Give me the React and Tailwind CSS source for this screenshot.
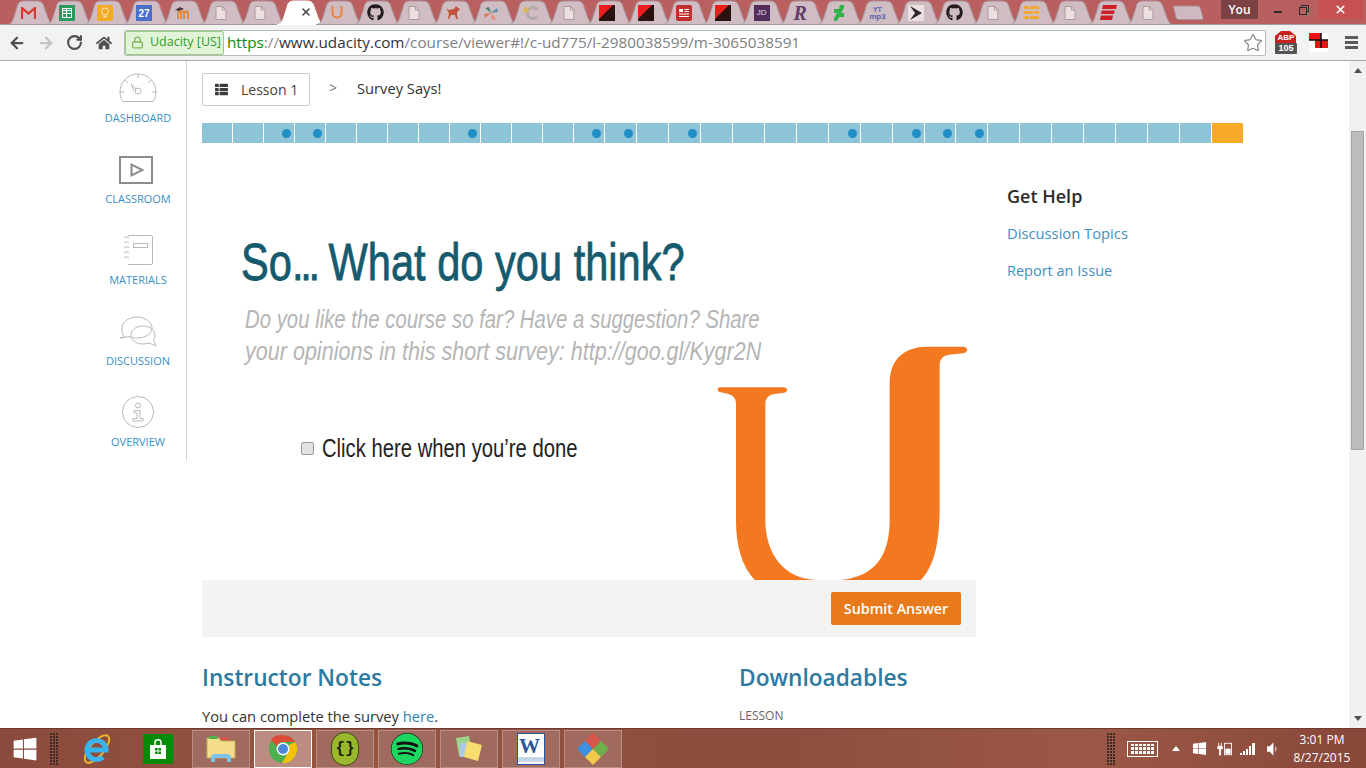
import { ArrowLeft, ArrowRight, RotateCw, Star, X, Lock } from 'lucide-react'
import { FaGithub, FaWindows, FaSpotify, FaThList, FaHome } from 'react-icons/fa'

const DOT_SEGMENTS = [2, 3, 8, 12, 13, 15, 20, 22, 23, 24]
const SEGMENT_COUNT = 33

function TabShape({ active }) {
  return (
    <svg className="absolute left-[-2px] top-0" width="46" height="25" viewBox="0 0 46 25">
      <path
        d="M0 24.5 C4 24.5 5 22 7 17 L11 4 C12 2 14 1 17 1 H30 C33 1 35 2 36 4 L41 18 C43 22 44 24.5 46 24.5 Z"
        fill={active ? '#ffffff' : '#cfbdc3'}
        stroke={active ? '#ffffff' : '#a8959b'}
        strokeWidth="1"
      />
    </svg>
  )
}

const DocIcon = () => (
  <svg width="12" height="14" viewBox="0 0 12 14">
    <path d="M1 .5h6.5L11 4v9.5H1z" fill="#ecdfe0" stroke="#ab9b9d" />
    <path d="M7.5 .5V4H11" fill="none" stroke="#ab9b9d" />
  </svg>
)

const RedBlack = () => (
  <svg width="16" height="16" viewBox="0 0 16 16">
    <rect width="16" height="16" fill="#2a1210" />
    <path d="M0 0h14L0 14z" fill="#ee1c1c" />
  </svg>
)

const favicons = {
  gmail: (
    <svg width="15" height="12" viewBox="0 0 15 12">
      <path d="M1 12V1l6.500 5.500L14 1v11" fill="none" stroke="#d5392c" strokeWidth="2.200" />
    </svg>
  ),
  sheets: (
    <div className="w-4 h-4 bg-[#2a9a5c] rounded-[1px] flex items-center justify-center">
      <div className="w-[10px] h-[10px] border border-white grid grid-cols-2 grid-rows-3">
        <div className="border-r border-b border-white"></div>
        <div className="border-b border-white"></div>
        <div className="border-r border-b border-white"></div>
        <div className="border-b border-white"></div>
        <div className="border-r border-white"></div>
        <div></div>
      </div>
    </div>
  ),
  keep: (
    <svg width="16" height="16" viewBox="0 0 16 16">
      <rect width="16" height="16" rx="1" fill="#f0ac27" />
      <circle cx="8" cy="6.500" r="3.500" fill="none" stroke="#fbe3ae" />
      <path d="M6.500 10.500h3v2h-3z" fill="#fbe3ae" />
    </svg>
  ),
  cal: (
    <div className="w-4 h-4 bg-[#4a6fc9] flex items-center justify-center text-white text-[10px] font-bold font-['Liberation_Sans',sans-serif] leading-none pt-[2px]">
      27
    </div>
  ),
  moodle: (
    <svg width="16" height="14" viewBox="0 0 16 14">
      <path d="M3 13V7c0-2 3-2 3 0v6M6 7c0-2 3-2 3 0v6M9 7c0-2 4-2 4 0v6" fill="none" stroke="#e8842c" strokeWidth="1.800" />
      <path d="M0 4l5-3 4 2-5 2z" fill="#4a3a34" />
    </svg>
  ),
  doc: <DocIcon />,
  u: (
    <svg width="12" height="13" viewBox="0 0 12 13">
      <path d="M1.500 0v7c0 6 9 6 9 0V0" fill="none" stroke="#e9853a" strokeWidth="2" />
    </svg>
  ),
  github: <FaGithub className="text-[#211a1c] text-[17px]" />,
  horse: (
    <svg width="16" height="16" viewBox="0 0 16 16">
      <path d="M1 3l3 2 5-1 2-3 2 2 2 1-3 3v3l1 4H11l-1-4H6l-2 4H3l1-6z" fill="#c4513a" />
    </svg>
  ),
  pinwheel: (
    <svg width="16" height="16" viewBox="0 0 16 16">
      <path d="M8 8L2 3l4-1z" fill="#4d7f7a" />
      <path d="M8 8l6-5 1 4z" fill="#5d8db0" />
      <path d="M8 8l5 6-4 1z" fill="#e88a6c" />
      <path d="M8 8l-6 5-1-4z" fill="#e07a5a" />
    </svg>
  ),
  starc: (
    <svg width="16" height="14" viewBox="0 0 16 14">
      <path d="M15 3.500A5.500 5.500 0 1 0 15 10.500" fill="none" stroke="#b3a9a6" strokeWidth="3" />
      <path d="M4 0l1 2.500 3 .2-2.300 1.800.8 2.800L4 5.800 1.500 7.300l.8-2.800L0 2.700l3-.2z" fill="#e3b34f" />
    </svg>
  ),
  redblack: <RedBlack />,
  news: (
    <svg width="16" height="16" viewBox="0 0 16 16">
      <rect width="16" height="16" rx="2" fill="#c0302f" />
      <path d="M3 4h4v3H3z" fill="#fff" />
      <path d="M8.500 4.500H13M8.500 6.500H13M3 9h10M3 11.500h10" stroke="#fff" strokeWidth="1" />
    </svg>
  ),
  jd: (
    <div className="w-4 h-4 bg-[#522d5b] flex items-center justify-center text-[#e6dbe6] text-[8px] leading-none font-['Liberation_Sans',sans-serif]">
      JD
    </div>
  ),
  r: <span className="font-['Liberation_Serif',serif] italic font-bold text-[20px] leading-none text-[#5f3a6d]">R</span>,
  da: (
    <svg width="12" height="16" viewBox="0 0 12 16">
      <path d="M7 0h4v3L8 8h3v4H6l-2 4H1v-3l3-5H1V4h5z" fill="#2fb24c" />
    </svg>
  ),
  yt: (
    <div className="flex flex-col items-center text-[#5a62ad] font-bold text-[7px] leading-[7px] font-['Liberation_Sans',sans-serif]">
      <span>YT</span>
      <span className="text-[8px]">mp3</span>
    </div>
  ),
  sprint: (
    <svg width="16" height="16" viewBox="0 0 16 16">
      <rect width="16" height="16" fill="#ecdfe0" />
      <path d="M2 1l12 7-12 7 5-7z" fill="#2b2627" />
    </svg>
  ),
  bars: (
    <svg width="15" height="13" viewBox="0 0 15 13">
      <path d="M0 0h5v3H0zM6 0h9v3H6zM0 5h9v3H0zM10 5h5v3h-5zM0 10h5v3H0zM6 10h9v3H6z" fill="#efa836" />
    </svg>
  ),
  espn: (
    <svg width="17" height="15" viewBox="0 0 17 15">
      <path d="M3 0h14l-1 4H2zM1.700 5.500h13l-.7 3.500H.9zM.7 10.500H13l-1 4.500H0z" fill="#cd2027" />
    </svg>
  ),
}

const TABS = [
  'gmail', 'sheets', 'keep', 'cal', 'moodle', 'doc', 'doc', 'active', 'u', 'github',
  'doc', 'horse', 'pinwheel', 'starc', 'doc', 'redblack', 'redblack', 'news', 'redblack', 'jd',
  'r', 'da', 'yt', 'sprint', 'github', 'doc', 'bars', 'doc', 'espn', 'doc',
]

function TabStrip() {
  return (
    <div className="h-[25px] bg-[#ba5f60] flex pl-[9px] border-b border-[#a29aa0]">
      {TABS.map((tab, i) => (
        <div key={i} className="relative w-[38.6px] h-[24px] shrink-0">
          <TabShape active={tab === 'active'} />
          {tab === 'active' ? (
            <div className="absolute left-[21px] top-[6px] text-[#444]">
              <X size={12} strokeWidth={3} />
            </div>
          ) : (
            <div className="absolute inset-0 flex items-center justify-center pt-[1px]">{favicons[tab]}</div>
          )}
        </div>
      ))}
      <svg className="ml-[6px] mt-[5px]" width="31" height="15" viewBox="0 0 31 15">
        <path d="M1 1h23c2 0 3 1 3.500 2.500L30 13c.2 1-.5 1.500-1.500 1.500H6c-1.500 0-2.500-.5-3-2L.5 2C.3 1.500.5 1 1 1z" fill="#cdb9bf" stroke="#ad8e92" />
      </svg>
      <div className="ml-auto flex items-start h-[20px]">
        <div className="w-[37px] h-[19px] bg-[#7c4243] text-white text-[12px] font-semibold flex items-center justify-center leading-none">
          You
        </div>
        <div className="w-[28px] h-[19px] ml-[6px] flex items-center justify-center pt-[5px]">
          <div className="w-[8px] h-[2px] bg-[#2a2a2a]"></div>
        </div>
        <div className="w-[24px] h-[19px] flex items-center justify-center">
          <svg width="10" height="10" viewBox="0 0 10 10">
            <path d="M2.500 2.500V.5h7v6h-2" fill="none" stroke="#2a2a2a" />
            <rect x=".5" y="2.500" width="7" height="7" fill="none" stroke="#2a2a2a" />
          </svg>
        </div>
        <div className="w-[45px] h-[19px] bg-[#c75050] ml-[2px] mr-[3px] flex items-center justify-center text-white">
          <X size={13} strokeWidth={3} />
        </div>
      </div>
    </div>
  )
}

function Toolbar() {
  return (
    <div className="h-[36px] bg-[#f2f2f2] border-b border-[#a8a8a8] flex items-center">
      <div className="w-[124px] shrink-0 flex items-center pl-[8px] gap-[11px]">
        <ArrowLeft size={18} strokeWidth={3} className="text-[#4f4f4f]" />
        <ArrowRight size={18} strokeWidth={3} className="text-[#c4c4c4]" />
        <RotateCw size={17} strokeWidth={3} className="text-[#4f4f4f]" />
        <FaHome size={16} className="ml-[2px] text-[#4f4f4f]" />
      </div>
      <div className="w-[1142px] h-[26px] bg-white border border-[#bbbbbb] rounded-[2px] flex items-center text-[15.25px] leading-none">
        <div className="w-[99px] h-[24px] bg-[#e2f4d8] border border-[#96cf80] rounded-[2px] flex items-center pl-[5px] gap-[6px] shrink-0 text-[#2f9e1f] text-[12.500px]">
          <Lock size={13} strokeWidth={2.500} className="text-[#7fb95a]" />
          <span>Udacity [US]</span>
        </div>
        <span className="ml-[3px] whitespace-nowrap">
          <span className="text-[#0a8a0a]">https</span>
          <span className="text-[#8a8a8a]">://</span>
          <span className="text-[#333333]">www.udacity.com</span>
          <span className="text-[#808080]">/course/viewer#!/c-ud775/l-2980038599/m-3065038591</span>
        </span>
        <Star size={20} strokeWidth={1.500} className="ml-auto mr-[2px] text-[#8a8a8a]" />
      </div>
      <div className="relative ml-[9px] w-[22px] h-[24px]">
        <svg width="21" height="18" viewBox="0 0 21 18">
          <path d="M6 0h9l6 5v13H0V5z" fill="#c81f1f" />
        </svg>
        <span className="absolute left-0 right-0 top-[3px] text-center text-white text-[8px] font-bold leading-none font-['Liberation_Sans',sans-serif]">ABP</span>
        <span className="absolute left-0 right-0 bottom-[1px] bg-[#555555] rounded-[1px] text-center text-white text-[9px] font-bold leading-[11px] font-['Liberation_Sans',sans-serif]">105</span>
      </div>
      <div className="ml-[12px] w-[19px] h-[19px] bg-white relative">
        <svg width="19" height="19" viewBox="0 0 19 19">
          <path d="M0 0h12v7h7v8H6V7H0z" fill="#ee1111" />
          <path d="M0 7h19M12 0v15" stroke="#111" strokeWidth="1.500" />
        </svg>
      </div>
      <div className="ml-[17px] flex flex-col gap-[2px]">
        <div className="w-[13px] h-[3px] bg-[#5a5a5a]"></div>
        <div className="w-[13px] h-[3px] bg-[#5a5a5a]"></div>
        <div className="w-[13px] h-[3px] bg-[#5a5a5a]"></div>
      </div>
    </div>
  )
}

function SideItem({ label, icon }) {
  return (
    <div className="h-[81px] shrink-0 flex flex-col items-center">
      <div className="h-[50px] pt-[4px] flex items-center justify-center">{icon}</div>
      <span className="text-[11px] leading-[14px] text-[#3a8fc4] uppercase">{label}</span>
    </div>
  )
}

function Sidebar() {
  return (
    <div className="w-[187px] h-[400px] shrink-0 border-r border-[#d4d4d4] pl-[88px]">
      <div className="w-[100px] flex flex-col items-center">
        <SideItem
          label="Dashboard"
          icon={
            <svg width="38" height="30" viewBox="0 0 38 30" fill="none" stroke="#b8b8b8">
              <path d="M4 28.500C2 26 1 22 1 19 1 9 9 1 19 1s18 8 18 18c0 3-1 7-3 9.500z" />
              <path d="M19 1v4M1 19h4M37 19h-4M6 7l3 3M32 7l-3 3" />
              <circle cx="19" cy="18" r="3" />
              <path d="M12 11l5 5M12 11l3 7" />
            </svg>
          }
        />
        <SideItem
          label="Classroom"
          icon={
            <svg className="-ml-[3px] mt-[1px]" width="34" height="28" viewBox="0 0 34 28" fill="none" stroke="#8c8c8c">
              <rect x="1" y="1" width="32" height="26" strokeWidth="2" />
              <path d="M12.500 8.500v11l11-5.500z" strokeWidth="2" />
            </svg>
          }
        />
        <SideItem
          label="Materials"
          icon={
            <svg width="30" height="30" viewBox="0 0 30 30" fill="none" stroke="#b8b8b8">
              <path d="M5 .5h23c1 0 1.500.5 1.500 1.500v26c0 1-.5 1.500-1.500 1.500H5" />
              <path d="M1 3c2-1.500 4-1.500 5 0M1 8c2-1.500 4-1.500 5 0M1 13c2-1.500 4-1.500 5 0M1 18c2-1.500 4-1.500 5 0M1 23c2-1.500 4-1.500 5 0" />
              <rect x="10.500" y="8.500" width="14" height="4" />
            </svg>
          }
        />
        <SideItem
          label="Discussion"
          icon={
            <svg width="38" height="31" viewBox="0 0 38 31" fill="none" stroke="#b8b8b8">
              <path d="M5 21C3 18 3 15 3 12 3 6 10 1 18 1s15 5 15 11-7 10-15 10c-3 0-6-.5-8-1.500L1 22z" />
              <path d="M12 19c0-5 5-9 12-9s12 4 12 9c0 2-.5 3-1.500 4.500L37 30l-7-3c-2 .8-4 1-6 1-7 0-12-4-12-9z" />
            </svg>
          }
        />
        <SideItem
          label="Overview"
          icon={
            <svg width="32" height="32" viewBox="0 0 32 32" fill="none" stroke="#b8b8b8">
              <circle cx="16" cy="16" r="15.500" />
              <circle cx="16" cy="9.500" r="2.500" />
              <path d="M12 14.500h6v8h3v2.500h-10v-2.500h4v-5.500h-3z" />
            </svg>
          }
        />
      </div>
    </div>
  )
}

function ProgressBar() {
  const segments = Array.from({ length: SEGMENT_COUNT }, (_, i) => i)
  return (
    <div className="w-[1041px] h-[20px] flex gap-px mt-[17px]">
      {segments.map(i => (
        <div
          key={i}
          className={`flex items-center justify-end pr-[3px] ${i < 13 ? 'w-[30px]' : 'flex-1'} ${i === SEGMENT_COUNT - 1 ? 'bg-[#f7a928]' : 'bg-[#8dc4d8]'}`}
        >
          {DOT_SEGMENTS.includes(i) && <div className="w-[9px] h-[9px] shrink-0 rounded-full bg-[#1f8fc4]"></div>}
        </div>
      ))}
    </div>
  )
}

function Card() {
  return (
    <div className="relative w-[774px]">
      <div className="h-[437px] pl-[39px] pt-[89px] font-['Liberation_Sans',sans-serif]">
        <h1 className="origin-left scale-x-[0.8] whitespace-nowrap text-[52px] leading-[60px] text-[#165a6e] font-normal [-webkit-text-stroke:0.8px_#165a6e]">
          So<span className="tracking-[-4px]">...</span> What do you think?
        </h1>
        <p className="mt-[11px] ml-[4px] whitespace-nowrap text-[25.500px] leading-[32px] italic text-[#b5b5b5]">
          <span className="block origin-left scale-x-[0.798]">Do you like the course so far? Have a suggestion? Share</span>
          <span className="block origin-left scale-x-[0.845]">your opinions in this short survey: http://goo.gl/Kygr2N</span>
        </p>
        <label className="mt-[65px] ml-[60px] flex items-center gap-[8px] text-[25px] leading-[32px] text-[#222222]">
          <input type="checkbox" className="appearance-none w-[13px] h-[13px] m-0 bg-[#e2e2e2] border border-[#9a9a9a] rounded-[2px]" />
          <span className="origin-left scale-x-[0.81] whitespace-nowrap">Click here when you’re done</span>
        </label>
      </div>
      <svg className="absolute left-[515px] top-[203px]" width="256" height="234" viewBox="50 18 768 702">
        <path
          d="M60 142 H252 Q262 144 260 152 Q258 158 250 158 L222 162 Q196 166 195 190 V540 C195 640 250 718 350 720 H420 C530 710 568 640 568 540 V130 C568 60 610 20 680 20 H790 Q802 22 800 32 Q798 38 788 40 L745 44 Q720 48 718 72 V500 C718 640 690 690 660 722 H165 C125 680 107 620 107 540 V190 Q107 170 85 162 L58 156 Q50 152 52 146 Q54 142 60 142 Z"
          fill="#f37820"
        />
      </svg>
      <div className="h-[57px] bg-[#f3f3f3] flex items-center justify-end pr-[15px]">
        <button className="w-[130px] h-[33px] bg-[#e87a1b] rounded-[2px] text-white text-[14.300px] font-semibold">
          Submit Answer
        </button>
      </div>
    </div>
  )
}

function Content() {
  return (
    <div className="flex-1 pl-[15px] min-w-0">
      <div className="flex items-start pt-[12px]">
        <div className="w-[108px] h-[33px] border border-[#cccccc] rounded-[2px] flex items-center pl-[12px] gap-[13px] text-[14px] text-[#444444]">
          <FaThList size={13} className="text-[#3c3c3c]" />
          <span>Lesson 1</span>
        </div>
        <span className="ml-[19px] mt-[4px] text-[14px] text-[#777777]">&gt;</span>
        <span className="ml-[20px] mt-[4px] text-[14.700px] text-[#333333]">Survey Says!</span>
      </div>
      <ProgressBar />
      <div className="flex">
        <Card />
        <aside className="ml-[31px] pt-[40px]">
          <h3 className="text-[18px] leading-[26px] font-semibold text-[#2b2b2b]">Get Help</h3>
          <div className="mt-[13px] text-[14.750px] leading-[22px] text-[#3f8fbf]">Discussion Topics</div>
          <div className="mt-[16px] text-[14.500px] leading-[22px] text-[#3f8fbf]">Report an Issue</div>
        </aside>
      </div>
      <div className="flex mt-[25px]">
        <div className="w-[537px]">
          <h2 className="text-[22.700px] leading-[32px] font-semibold text-[#2e7a9e]">Instructor Notes</h2>
          <p className="mt-[11px] text-[14.700px] leading-[22px] text-[#333333]">
            You can complete the survey <span className="text-[#2e7fb5]">here</span>.
          </p>
        </div>
        <div>
          <h2 className="text-[22.700px] leading-[32px] font-semibold text-[#2e7a9e]">Downloadables</h2>
          <p className="mt-[11px] text-[12px] leading-[22px] text-[#666666]">LESSON</p>
        </div>
      </div>
    </div>
  )
}

function Scrollbar() {
  return (
    <div className="w-[17px] shrink-0 bg-[#f1f1f1] flex flex-col items-center">
      <svg className="mt-[7px]" width="8" height="5" viewBox="0 0 8 5">
        <path d="M4 0l4 5H0z" fill="#505050" />
      </svg>
      <div className="w-[13px] h-[319px] mt-[58px] bg-[#bcbcbc] border border-[#a3a3a3]"></div>
      <svg className="mt-auto mb-[7px]" width="8" height="5" viewBox="0 0 8 5">
        <path d="M4 5l4-5H0z" fill="#505050" />
      </svg>
    </div>
  )
}

function Grip() {
  return (
    <div className="grid grid-cols-3 gap-[1px] w-[8px]">
      {Array.from({ length: 33 }, (_, i) => (
        <div key={i} className="w-[2px] h-[2px] bg-[#3e2a26]"></div>
      ))}
    </div>
  )
}

function TaskButton({ active, children }) {
  return (
    <div
      className={`w-[58px] h-[38px] flex items-center justify-center border ${active ? 'border-white bg-[#bb8c82]' : 'border-[#b88f85] bg-[#a06a5e]'}`}
    >
      {children}
    </div>
  )
}

function Taskbar() {
  return (
    <div className="h-[40px] shrink-0 flex items-center bg-[linear-gradient(90deg,#8a4a3d,#97553f_25%,#8c4c3e_55%,#9c5846_80%,#874739)] border-t border-[#6e3a30] text-white">
      <FaWindows size={26} className="ml-[12px] text-white" />
      <div className="ml-[12px]"><Grip /></div>
      <svg className="ml-[24px]" width="30" height="34" viewBox="0 0 30 34" fill="none">
        <ellipse cx="15" cy="17" rx="17" ry="7" transform="rotate(-50 15 17)" stroke="#eab72c" strokeWidth="2" />
        <path d="M6 18H24A9.500 9.500 0 1 0 21 25" stroke="#3ab4ec" strokeWidth="5" />
      </svg>
      <div className="ml-[31px] w-[30px] h-[30px] bg-[#078a07] flex items-center justify-center">
        <svg width="18" height="20" viewBox="0 0 18 20">
          <path d="M1 6h16v14H1z" fill="#fff" />
          <path d="M6 6V3c0-3 6-3 6 0v3" fill="none" stroke="#fff" strokeWidth="1.500" />
          <path d="M6 9h2.600v2.600H6zM9.400 9H12v2.600H9.400zM6 12.400h2.600V15H6zM9.400 12.400H12V15H9.400z" fill="#078a07" />
        </svg>
      </div>
      <div className="ml-[19px] flex gap-[4px]">
        <TaskButton>
          <svg width="30" height="28" viewBox="0 0 30 28">
            <path d="M1 3h12l2 3h14v17H1z" fill="#f3dc8c" stroke="#c9a94e" />
            <path d="M3 1h8v3H3z" fill="#4caf50" />
            <path d="M15 2h8v3h-8z" fill="#d9534f" />
            <path d="M5 27v-5c0-2 2-3 4-3h12c2 0 4 1 4 3v5h-4v-4H9v4z" fill="#7cc5e8" />
          </svg>
        </TaskButton>
        <TaskButton active>
          <svg width="28" height="28" viewBox="0 0 28 28">
            <circle cx="14" cy="14" r="14" fill="#4caf50" />
            <path d="M14 0a14 14 0 0 1 12.100 7H14a7 7 0 0 0-6.500 4.500L2 4.600A14 14 0 0 1 14 0z" fill="#dd4b39" />
            <path d="M26.100 7A14 14 0 0 1 13 28l6-10.500A7 7 0 0 0 19.500 10z" fill="#f4c20d" />
            <circle cx="14" cy="14" r="6.500" fill="#fff" />
            <circle cx="14" cy="14" r="5" fill="#4a89dc" />
          </svg>
        </TaskButton>
        <TaskButton>
          <div className="w-[28px] h-[34px] rounded-full bg-[#9ab82e] border border-[#3b4a12] flex items-center justify-center text-[#1b1f0a] font-bold text-[16px] leading-none font-['Liberation_Mono',monospace]">
            {'{}'}
          </div>
        </TaskButton>
        <TaskButton>
          <FaSpotify size={32} className="text-[#1ed760] bg-[#111] rounded-full" />
        </TaskButton>
        <TaskButton>
          <svg width="32" height="28" viewBox="0 0 32 28">
            <path d="M3 3l13-2 3 17-13 3z" fill="#9fd38a" />
            <path d="M7 8h14v14H7z" fill="#a9c8ea" />
            <path d="M14 6l15 4-4 16-14-4z" fill="#f7de6f" />
          </svg>
        </TaskButton>
        <TaskButton>
          <div className="relative w-[28px] h-[32px] bg-white border border-[#2b579a] flex items-start pl-[1px]">
            <span className="text-[#2b579a] font-bold text-[21px] leading-[24px] font-['Liberation_Serif',serif]">W</span>
            <div className="absolute left-0 right-0 bottom-[2px] h-[5px] bg-[#c8d6ea]"></div>
          </div>
        </TaskButton>
        <TaskButton>
          <svg width="32" height="32" viewBox="0 0 32 32">
            <path d="M16 0l8 8-8 8-8-8z" fill="#d9574a" />
            <path d="M8 8l8 8-8 8-8-8z" fill="#3f8ee0" />
            <path d="M24 8l8 8-8 8-8-8z" fill="#6bb04b" />
            <path d="M16 16l8 8-8 8-8-8z" fill="#eec94b" />
          </svg>
        </TaskButton>
      </div>
      <div className="ml-[485px]"><Grip /></div>
      <div className="ml-[12px] w-[31px] h-[16px] border border-white flex items-center justify-center">
        <div className="w-[23px] h-[10px] grid grid-cols-6 grid-rows-3 gap-px">
          {Array.from({ length: 18 }, (_, i) => <div key={i} className="bg-white"></div>)}
        </div>
      </div>
      <svg className="ml-[14px]" width="8" height="5" viewBox="0 0 8 5">
        <path d="M4 0l4 5H0z" fill="#fff" />
      </svg>
      <FaWindows size={15} className="ml-[12px] text-white" />
      <svg className="ml-[10px]" width="15" height="16" viewBox="0 0 17 16" fill="none" stroke="#fff">
        <rect x="8.500" y="1.500" width="8" height="13" />
        <path d="M2 1v4M5 1v4M1 5h5v3H4v7H3V8H1z" fill="#fff" />
        <path d="M10 8h5v5h-5z" fill="#fff" />
      </svg>
      <svg className="ml-[8px]" width="16" height="12" viewBox="0 0 16 12">
        <path d="M0 10h2v2H0zM3 8h2v4H3zM6 6h2v6H6zM9 3h2v9H9zM12 0h3v12h-3z" fill="#fff" />
      </svg>
      <svg className="ml-[11px]" width="11" height="14" viewBox="0 0 12 14">
        <path d="M0 4h3l4-4v14l-4-4H0z" fill="#fff" />
        <path d="M9 4.500c1 1.500 1 3.500 0 5" fill="none" stroke="#fff" />
      </svg>
      <div className="ml-[14px] flex flex-col items-center text-[12px] leading-[18px] text-white w-[60px]">
        <span>3:01 PM</span>
        <span>8/27/2015</span>
      </div>
    </div>
  )
}

export default function App() {
  return (
    <div className="w-[1366px] h-[768px] overflow-hidden flex flex-col bg-white font-['Open_Sans',sans-serif]">
      <TabStrip />
      <Toolbar />
      <div className="flex-1 flex min-h-0 overflow-hidden">
        <Sidebar />
        <Content />
        <Scrollbar />
      </div>
      <Taskbar />
    </div>
  )
}
